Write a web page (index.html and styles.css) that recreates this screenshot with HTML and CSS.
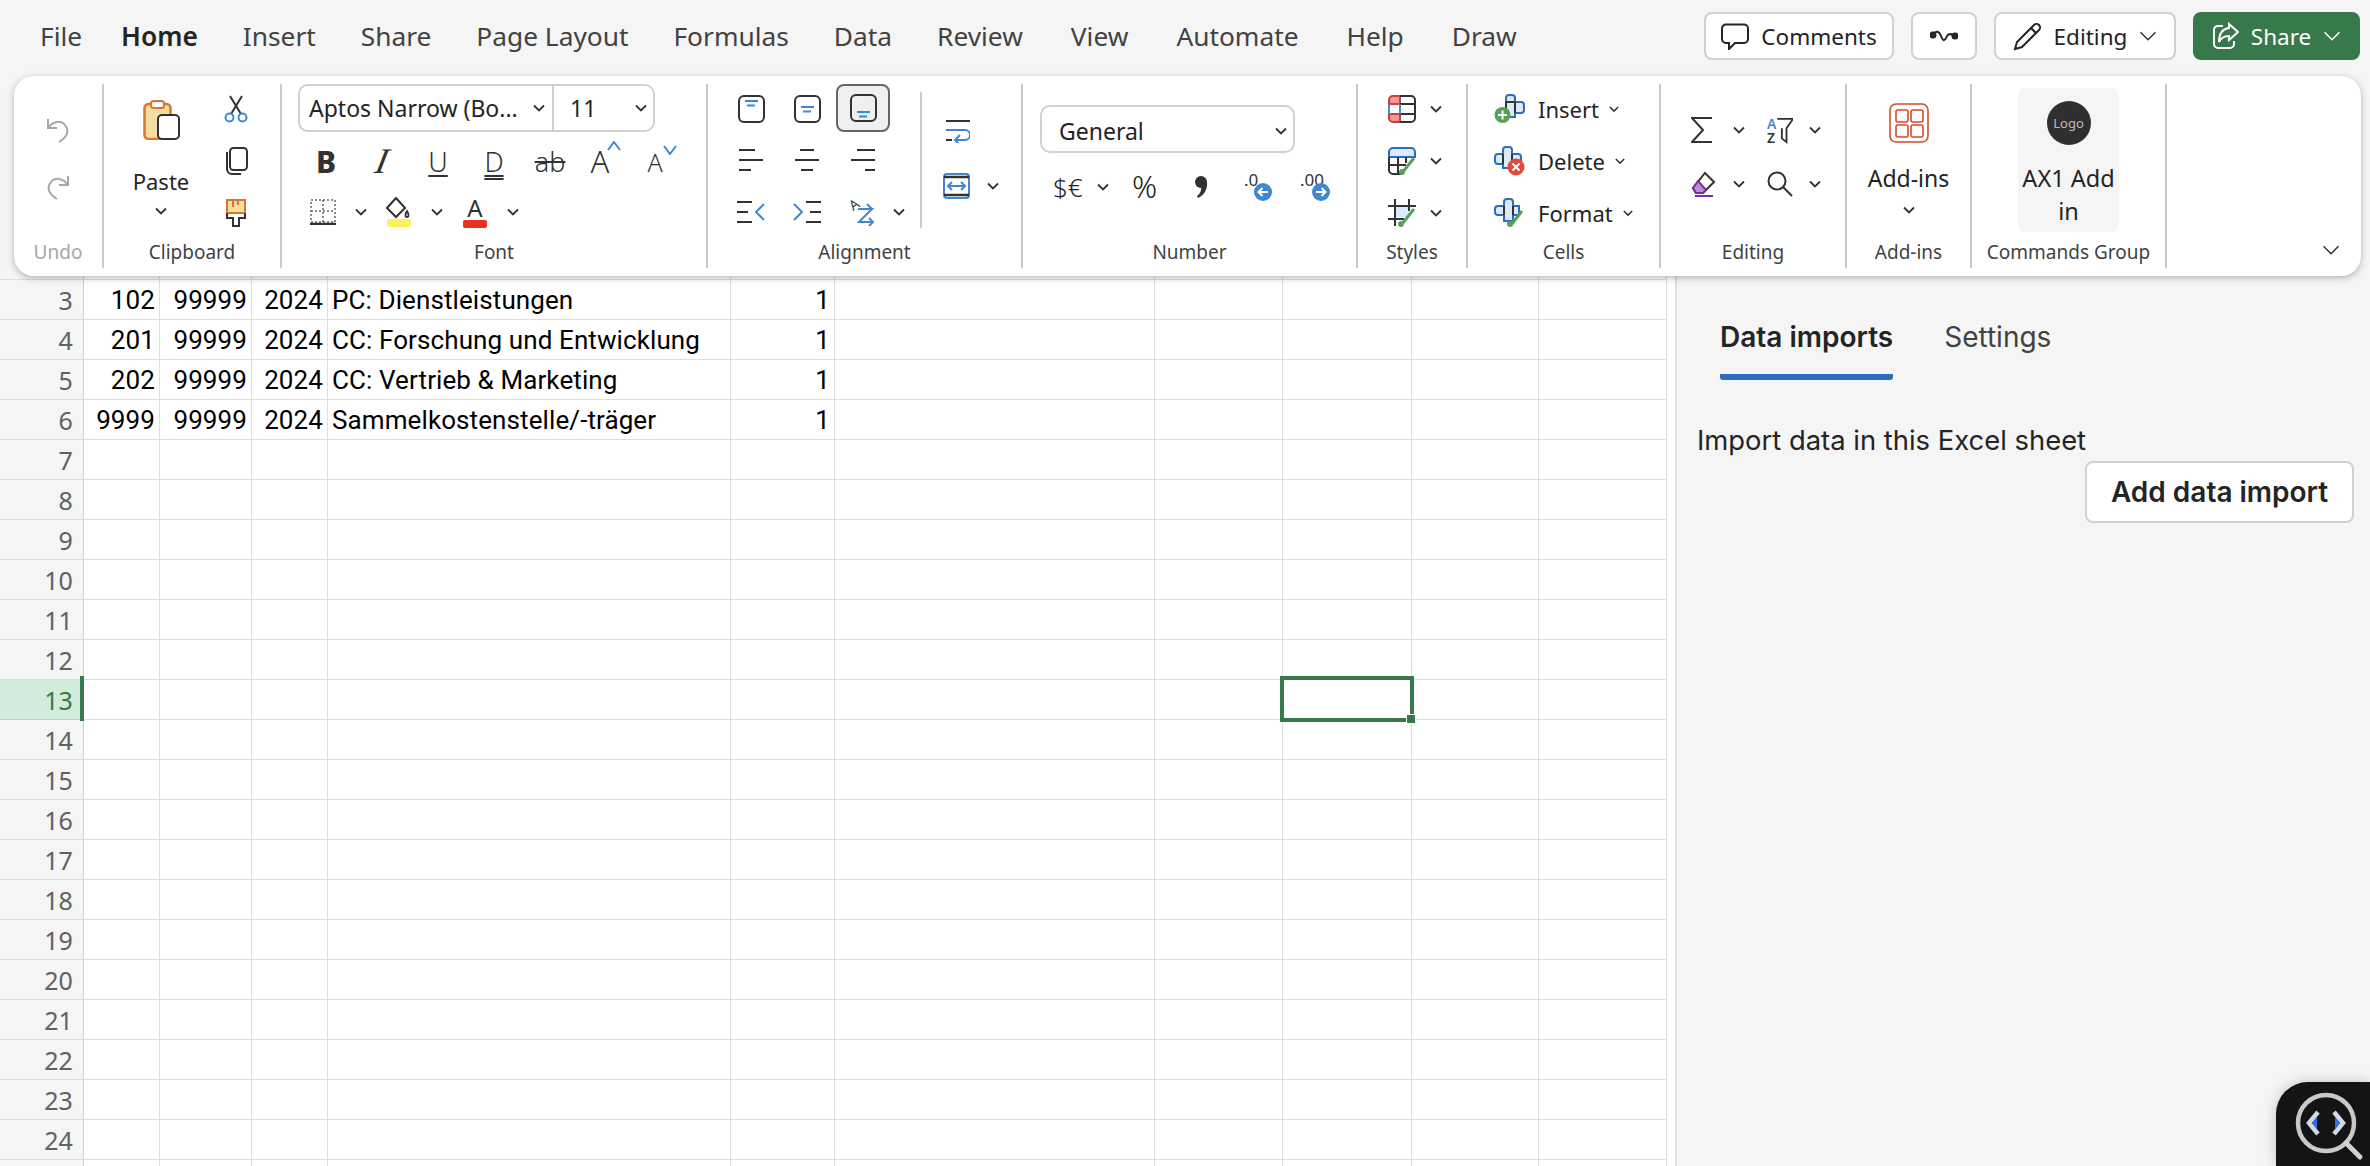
FILE: index.html
```html
<!DOCTYPE html>
<html lang="en">

<head>
    <meta charset="UTF-8">
    <title>Excel - Data imports</title>
    <link rel="stylesheet" href="styles.css">
</head>

<body>
    <svg class="defs" aria-hidden="true">
        <symbol id="chev" viewBox="0 0 12 8"><path d="M1 1.5 6 6.5 11 1.5" fill="none" stroke="currentColor"/></symbol>
    </svg>

    <header class="topbar">
        <nav class="tabs">
            <span>File</span><span class="on">Home</span><span>Insert</span><span>Share</span><span>Page Layout</span><span>Formulas</span><span>Data</span><span>Review</span><span>View</span><span>Automate</span><span>Help</span><span>Draw</span>
        </nav>
        <div class="actions">
            <button class="btn w-comments">
                <svg width="28" height="27" viewBox="0 0 28 27" fill="none" stroke="#242424" stroke-width="2"><path d="M5 1.500H23a4 4 0 0 1 4 4V16a4 4 0 0 1-4 4H14L8 26V20H5a4 4 0 0 1-4-4V5.500a4 4 0 0 1 4-4Z"/></svg>
                Comments
            </button>
            <button class="btn w-wave">
                <svg width="28" height="14" viewBox="0 0 28 14" fill="none" stroke="#242424" stroke-width="2"><path d="M3 6C6 1 9 2 11 7 13 13 15 12 17 7 19 4 22 5 25 7"/><circle cx="3" cy="6" r="2.500" fill="#242424"/><circle cx="25" cy="7" r="2.500" fill="#242424"/></svg>
            </button>
            <button class="btn w-editing">
                <svg width="29" height="29" viewBox="0 0 29 29" fill="none" stroke="#242424" stroke-width="2"><path d="M21 3a3.500 3.500 0 0 1 5 5L9 25 2 27 4 20Z"/><path d="M18 6l5 5"/></svg>
                Editing
                <svg class="chev big"><use href="#chev"/></svg>
            </button>
            <button class="btn share">
                <svg width="27" height="28" viewBox="0 0 27 28" fill="none" stroke="#fff" stroke-width="2"><path d="M11 4H6a4 4 0 0 0-4 4V22a4 4 0 0 0 4 4H18a4 4 0 0 0 4-4V19"/><path d="M17 2 26 10 17 18V14C12 14 9 16 7 20 7 13 10 7 17 6Z"/></svg>
                Share
                <svg class="chev big"><use href="#chev"/></svg>
            </button>
        </div>
    </header>

    <section class="ribbon">
        <div class="group g-undo">
            <div class="body undo">
                <svg width="24" height="26" viewBox="0 0 24 26" fill="none" stroke="#a8a8a8" stroke-width="2"><path d="M2 2V11H11"/><path d="M2 11C7 4 15 3 19 8 24 14 21 20 13 25"/></svg>
                <svg width="24" height="26" viewBox="0 0 24 26" fill="none" stroke="#a8a8a8" stroke-width="2"><path d="M22 2V11H13"/><path d="M22 11C17 4 9 3 5 8 0 14 3 20 11 25"/></svg>
            </div>
            <div class="label muted">Undo</div>
        </div>

        <div class="group g-clip">
            <div class="body clip">
                <div class="big-cmd paste">
                    <svg width="37" height="40" viewBox="0 0 37 40"><rect x="1.500" y="4" width="26" height="35" rx="4" fill="#f5dca3" stroke="#d9772b" stroke-width="2.500"/><rect x="8" y="1" width="13" height="7" rx="2.500" fill="#fff" stroke="#d9772b" stroke-width="2"/><rect x="15" y="15" width="21" height="24" rx="4" fill="#fff" stroke="#323232" stroke-width="2"/></svg>
                    <span class="txt">Paste</span>
                    <svg class="chev"><use href="#chev"/></svg>
                </div>
                <div class="stack centered">
                    <svg width="24" height="28" viewBox="0 0 24 28" fill="none" stroke-width="2"><path d="M6 1 17 19M18 1 7 19" stroke="#323232"/><circle cx="5.500" cy="22.500" r="4" stroke="#3f88cf"/><circle cx="18.500" cy="22.500" r="4" stroke="#3f88cf"/></svg>
                    <svg width="23" height="28" viewBox="0 0 23 28" fill="none" stroke="#323232" stroke-width="2"><rect x="5" y="1" width="17" height="22" rx="3.500"/><path d="M2 5V22a5 5 0 0 0 5 5H16"/></svg>
                    <svg width="20" height="28" viewBox="0 0 20 28"><rect x="1" y="1" width="18" height="13" fill="#f5dca3" stroke="#d9772b" stroke-width="2"/><path d="M7 2V8M12 2V6" stroke="#d9772b" stroke-width="2"/><path d="M1 14V19H7V27H13V19H19V14" fill="none" stroke="#323232" stroke-width="2"/></svg>
                </div>
            </div>
            <div class="label">Clipboard</div>
        </div>

        <div class="group g-font">
            <div class="body font">
                <div class="combo">
                    <div class="combo-name">Aptos Narrow (Bo...<svg class="chev"><use href="#chev"/></svg></div>
                    <div class="combo-size">11<svg class="chev"><use href="#chev"/></svg></div>
                </div>
                <div class="fmt-row">
                    <span class="fmt bold">B</span>
                    <span class="fmt ital">I</span>
                    <span class="fmt under">U</span>
                    <span class="fmt dbl">D</span>
                    <span class="fmt strike">ab</span>
                    <span class="fmt grow">A<svg width="14" height="10" viewBox="0 0 14 10" fill="none" stroke="#3f88cf" stroke-width="2"><path d="M1 9 7 1 13 9"/></svg></span>
                    <span class="fmt shrink">A<svg width="14" height="10" viewBox="0 0 14 10" fill="none" stroke="#3f88cf" stroke-width="2"><path d="M1 1 7 9 13 1"/></svg></span>
                </div>
                <div class="paint-row">
                    <svg width="26" height="26" viewBox="0 0 26 26" fill="none"><path d="M1 1H25V23H1ZM13 1V23M1 12H25" stroke="#666" stroke-width="1.500" stroke-dasharray="2 2"/><path d="M0 25H26" stroke="#323232" stroke-width="2.500"/></svg>
                    <svg class="chev"><use href="#chev"/></svg>
                    <svg width="26" height="30" viewBox="0 0 26 30"><rect x="1" y="22" width="24" height="8" rx="2" fill="#fdf25c"/><path d="M10 1 19 11 10 20 1 11Z" fill="#fff" stroke="#323232" stroke-width="2"/><path d="M21 14c2 3 2 6 0 6s-2-3 0-6Z" fill="#fff" stroke="#323232" stroke-width="1.800"/></svg>
                    <svg class="chev"><use href="#chev"/></svg>
                    <span class="fcolor">A<i></i></span>
                    <svg class="chev"><use href="#chev"/></svg>
                </div>
            </div>
            <div class="label">Font</div>
        </div>

        <div class="group g-align">
            <div class="body align">
                <div class="align-grid">
                    <span class="cell"><svg width="27" height="28" viewBox="0 0 27 28" fill="none" stroke-width="2"><rect x="1" y="1" width="25" height="26" rx="5" stroke="#323232"/><path d="M7 6H20M9 10.500H17" stroke="#3f88cf"/></svg></span>
                    <span class="cell"><svg width="27" height="28" viewBox="0 0 27 28" fill="none" stroke-width="2"><rect x="1" y="1" width="25" height="26" rx="5" stroke="#323232"/><path d="M7 12H20M9 16.500H17" stroke="#3f88cf"/></svg></span>
                    <span class="cell active"><svg width="27" height="28" viewBox="0 0 27 28" fill="none" stroke-width="2"><rect x="1" y="1" width="25" height="26" rx="5" stroke="#323232"/><path d="M7 18H20M9 22.500H17" stroke="#3f88cf"/></svg></span>
                    <span class="cell"></span>

                    <span class="cell"><svg width="24" height="24" viewBox="0 0 24 24" stroke="#323232" stroke-width="2"><path d="M0 2H16M0 12H24M0 22H12"/></svg></span>
                    <span class="cell"><svg width="24" height="24" viewBox="0 0 24 24" stroke="#323232" stroke-width="2"><path d="M5 2H19M0 12H24M6 22H18"/></svg></span>
                    <span class="cell"><svg width="24" height="24" viewBox="0 0 24 24" stroke="#323232" stroke-width="2"><path d="M6 2H24M0 12H24M14 22H24"/></svg></span>
                    <span class="cell"></span>

                    <span class="cell"><svg width="28" height="24" viewBox="0 0 28 24" fill="none" stroke-width="2"><path d="M0 2H15M0 12H11M0 22H15" stroke="#323232"/><path d="M27 4 19 12 27 20" stroke="#3f88cf"/></svg></span>
                    <span class="cell"><svg width="28" height="24" viewBox="0 0 28 24" fill="none" stroke-width="2"><path d="M13 2H28M17 12H28M13 22H28" stroke="#323232"/><path d="M1 4 9 12 1 20" stroke="#3f88cf"/></svg></span>
                    <span class="cell"><svg width="26" height="28" viewBox="0 0 26 28" fill="none"><text class="tilt" x="0" y="11" transform="rotate(-35 5 7)">A</text><path d="M8 11H22L9 24H23M19 20 23 24 19 28M17 6 22 11 17 16" stroke="#3f88cf" stroke-width="2"/></svg></span>
                    <span class="cell chev-cell"><svg class="chev"><use href="#chev"/></svg></span>
                </div>
                <div class="align-side">
                    <svg width="24" height="24" viewBox="0 0 24 24" fill="none" stroke-width="2"><path d="M0 2H24M0 21H6" stroke="#323232"/><path d="M0 11H19a5 5 0 0 1 0 10H10M14 16 9 21 14 26" stroke="#3f88cf"/></svg>
                    <div class="merge">
                        <svg width="27" height="26" viewBox="0 0 27 26" fill="none" stroke-width="2"><rect x="1" y="1" width="25" height="24" rx="3" stroke="#3f88cf"/><path d="M1 4H26M1 22H26" stroke="#323232" stroke-width="2.500"/><path d="M5 13H22M9 9 5 13 9 17M18 9 22 13 18 17" stroke="#3f88cf"/></svg>
                        <svg class="chev"><use href="#chev"/></svg>
                    </div>
                </div>
            </div>
            <div class="label">Alignment</div>
        </div>

        <div class="group g-num">
            <div class="body num">
                <div class="combo-general">General<svg class="chev"><use href="#chev"/></svg></div>
                <div class="num-row">
                    <span class="cur">$€</span>
                    <svg class="chev"><use href="#chev"/></svg>
                    <span class="pct">%</span>
                    <svg width="14" height="24" viewBox="0 0 14 24"><circle cx="7" cy="7" r="6"/><path d="M13 7C14 15 9 21 4 23L3 21C6 19 8 15 7 10Z"/></svg>
                    <svg width="28" height="28" viewBox="0 0 28 28"><text class="dec" x="0" y="13">.0</text><circle cx="19" cy="19" r="9" fill="#3f88cf"/><path d="M24 19H15M18.500 15 14.500 19 18.500 23" fill="none" stroke="#fff" stroke-width="2"/></svg>
                    <svg width="30" height="28" viewBox="0 0 30 28"><text class="dec" x="0" y="13">.00</text><circle cx="21" cy="19" r="9" fill="#3f88cf"/><path d="M16 19H25M21.500 15 25.500 19 21.500 23" fill="none" stroke="#fff" stroke-width="2"/></svg>
                </div>
            </div>
            <div class="label">Number</div>
        </div>

        <div class="group g-styles">
            <div class="body styles stack">
                <div class="line">
                    <svg width="28" height="28" viewBox="0 0 28 28" fill="none" stroke-width="2"><path d="M1 9V5a4 4 0 0 1 4-4H12V9ZM1 19H12V27H5a4 4 0 0 1-4-4Z" fill="#f0989a" stroke="#c7403a"/><path d="M1 9V19" stroke="#3f88cf"/><path d="M12 1H23a4 4 0 0 1 4 4V23a4 4 0 0 1-4 4H12M12 9H27M12 19H27" stroke="#323232"/><path d="M12 9V19" stroke="#3f88cf"/></svg>
                    <svg class="chev"><use href="#chev"/></svg>
                </div>
                <div class="line">
                    <svg width="28" height="28" viewBox="0 0 28 28" fill="none" stroke-width="2"><path d="M1 10V5a4 4 0 0 1 4-4H23a4 4 0 0 1 4 4V10Z" fill="#dcebf9" stroke="#2f6cbe"/><path d="M1 10V23a4 4 0 0 0 4 4H13M1 18H18M10 10V27M18 10V16" stroke="#323232"/><path d="M14 26 26 11" stroke="#56a05a" stroke-width="3"/><circle cx="14" cy="25" r="3" fill="#56a05a"/></svg>
                    <svg class="chev"><use href="#chev"/></svg>
                </div>
                <div class="line">
                    <svg width="28" height="28" viewBox="0 0 28 28" fill="none" stroke-width="2"><path d="M7 7H21V18H7Z" fill="#dcebf9"/><path d="M7 0V27M21 0V12M0 7H28M0 20H16" stroke="#323232"/><path d="M14 25 26 10" stroke="#56a05a" stroke-width="3"/><circle cx="13" cy="25" r="3" fill="#56a05a"/></svg>
                    <svg class="chev"><use href="#chev"/></svg>
                </div>
            </div>
            <div class="label">Styles</div>
        </div>

        <div class="group g-cells">
            <div class="body cells stack">
                <div class="line">
                    <svg width="32" height="30" viewBox="0 0 32 30" fill="none" stroke="#2f6cbe" stroke-width="2"><path d="M12 8V4a3 3 0 0 1 3-3h3a3 3 0 0 1 3 3V8h6a3 3 0 0 1 3 3v5a3 3 0 0 1-3 3H21v4H12V19" fill="#dcebf9"/><path d="M12 8V19M21 8V19M12 8H21" stroke="#323232"/><circle cx="8.500" cy="21" r="8" fill="#56a05a" stroke="none"/><path d="M8.500 16.500V25.500M4 21H13" stroke="#fff"/></svg>
                    <span>Insert</span>
                    <svg class="chev"><use href="#chev"/></svg>
                </div>
                <div class="line">
                    <svg width="32" height="30" viewBox="0 0 32 30" fill="none" stroke="#2f6cbe" stroke-width="2"><path d="M9 8V4a3 3 0 0 1 3-3h3a3 3 0 0 1 3 3V8h6a3 3 0 0 1 3 3v5H18v6H9V18H4a3 3 0 0 1-3-3V11a3 3 0 0 1 3-3Z" fill="#dcebf9"/><path d="M9 8V18M18 8V18" stroke="#323232"/><circle cx="22" cy="21" r="8.500" fill="#e04a3f" stroke="none"/><path d="M18.500 17.500 25.500 24.500M25.500 17.500 18.500 24.500" stroke="#fff"/></svg>
                    <span>Delete</span>
                    <svg class="chev"><use href="#chev"/></svg>
                </div>
                <div class="line">
                    <svg width="32" height="30" viewBox="0 0 32 30" fill="none" stroke="#2f6cbe" stroke-width="2"><path d="M10 8V4a3 3 0 0 1 3-3h3a3 3 0 0 1 3 3V8h6v9H19v6H10V17H4a3 3 0 0 1-3-3V11a3 3 0 0 1 3-3Z" fill="#dcebf9"/><path d="M10 8V17M19 8V17" stroke="#323232"/><path d="M17 27 28 13" stroke="#56a05a" stroke-width="3"/><circle cx="16" cy="26" r="3" fill="#56a05a" stroke="none"/></svg>
                    <span>Format</span>
                    <svg class="chev"><use href="#chev"/></svg>
                </div>
            </div>
            <div class="label">Cells</div>
        </div>

        <div class="group g-edit">
            <div class="body edit">
                <div class="line">
                    <span class="slot"><svg width="22" height="26" viewBox="0 0 22 26" fill="none" stroke="#323232" stroke-width="2"><path d="M21 1H1L12 13 1 25H21"/></svg></span>
                    <svg class="chev"><use href="#chev"/></svg>
                </div>
                <div class="line">
                    <span class="slot"><svg width="28" height="28" viewBox="0 0 28 28" fill="none"><text class="az blue" x="0" y="12">A</text><text class="az" x="0" y="27">Z</text><path d="M11 1H28L21 11V26L16 22V11" stroke="#323232" stroke-width="2"/></svg></span>
                    <svg class="chev"><use href="#chev"/></svg>
                </div>
                <div class="line">
                    <span class="slot"><svg width="26" height="26" viewBox="0 0 26 26" fill="none" stroke-width="2"><path d="M14 2 23 11 12 22 5 22 2 17Z" fill="#fff" stroke="#323232"/><path d="M7 10 15 19 12 22 5 22 2 17Z" fill="#b98dcf" stroke="#7b2e9e"/><path d="M4 25H22" stroke="#7b2e9e"/></svg></span>
                    <svg class="chev"><use href="#chev"/></svg>
                </div>
                <div class="line">
                    <span class="slot"><svg width="26" height="26" viewBox="0 0 26 26" fill="none" stroke="#323232" stroke-width="2"><circle cx="10" cy="10" r="8.500"/><path d="M16 16 25 25"/></svg></span>
                    <svg class="chev"><use href="#chev"/></svg>
                </div>
            </div>
            <div class="label">Editing</div>
        </div>

        <div class="group g-addins">
            <div class="body big-cmd addin">
                <svg width="40" height="40" viewBox="0 0 40 40" fill="none" stroke="#d84a2a" stroke-width="1.600"><rect x="1" y="1" width="38" height="38" rx="6"/><rect x="7" y="7" width="12" height="12" rx="2"/><rect x="22" y="7" width="12" height="12" rx="2"/><rect x="7" y="22" width="12" height="12" rx="2"/><rect x="22" y="22" width="12" height="12" rx="2"/></svg>
                <span class="txt">Add-ins</span>
                <svg class="chev"><use href="#chev"/></svg>
            </div>
            <div class="label">Add-ins</div>
        </div>

        <div class="group g-cmd">
            <div class="body">
                <div class="tile">
                    <div class="logo">Logo</div>
                    <div class="tile-text">AX1 Add<br>in</div>
                </div>
            </div>
            <div class="label">Commands Group</div>
        </div>

        <div class="collapse">
            <svg class="chev big"><use href="#chev"/></svg>
        </div>
    </section>

    <main class="workspace">
        <div class="sheet">
            <table class="grid">
                <colgroup>
                    <col class="c-head"><col class="c-a"><col class="c-b"><col class="c-c"><col class="c-d"><col class="c-e"><col class="c-f"><col class="c-g"><col class="c-h"><col class="c-i"><col class="c-j">
                </colgroup>
                <tr class="cut"><th></th><td></td><td></td><td></td><td></td><td></td><td></td><td></td><td></td><td></td><td></td></tr>
                <tr><th>3</th><td class="n">102</td><td class="n">99999</td><td class="n">2024</td><td>PC: Dienstleistungen</td><td class="n">1</td><td></td><td></td><td></td><td></td><td></td></tr>
                <tr><th>4</th><td class="n">201</td><td class="n">99999</td><td class="n">2024</td><td>CC: Forschung und Entwicklung</td><td class="n">1</td><td></td><td></td><td></td><td></td><td></td></tr>
                <tr><th>5</th><td class="n">202</td><td class="n">99999</td><td class="n">2024</td><td>CC: Vertrieb &amp; Marketing</td><td class="n">1</td><td></td><td></td><td></td><td></td><td></td></tr>
                <tr><th>6</th><td class="n">9999</td><td class="n">99999</td><td class="n">2024</td><td>Sammelkostenstelle/-träger</td><td class="n">1</td><td></td><td></td><td></td><td></td><td></td></tr>
                <tr><th>7</th><td></td><td></td><td></td><td></td><td></td><td></td><td></td><td></td><td></td><td></td></tr>
                <tr><th>8</th><td></td><td></td><td></td><td></td><td></td><td></td><td></td><td></td><td></td><td></td></tr>
                <tr><th>9</th><td></td><td></td><td></td><td></td><td></td><td></td><td></td><td></td><td></td><td></td></tr>
                <tr><th>10</th><td></td><td></td><td></td><td></td><td></td><td></td><td></td><td></td><td></td><td></td></tr>
                <tr><th>11</th><td></td><td></td><td></td><td></td><td></td><td></td><td></td><td></td><td></td><td></td></tr>
                <tr><th>12</th><td></td><td></td><td></td><td></td><td></td><td></td><td></td><td></td><td></td><td></td></tr>
                <tr><th class="cur-row">13</th><td></td><td></td><td></td><td></td><td></td><td></td><td></td><td></td><td></td><td></td></tr>
                <tr><th>14</th><td></td><td></td><td></td><td></td><td></td><td></td><td></td><td></td><td></td><td></td></tr>
                <tr><th>15</th><td></td><td></td><td></td><td></td><td></td><td></td><td></td><td></td><td></td><td></td></tr>
                <tr><th>16</th><td></td><td></td><td></td><td></td><td></td><td></td><td></td><td></td><td></td><td></td></tr>
                <tr><th>17</th><td></td><td></td><td></td><td></td><td></td><td></td><td></td><td></td><td></td><td></td></tr>
                <tr><th>18</th><td></td><td></td><td></td><td></td><td></td><td></td><td></td><td></td><td></td><td></td></tr>
                <tr><th>19</th><td></td><td></td><td></td><td></td><td></td><td></td><td></td><td></td><td></td><td></td></tr>
                <tr><th>20</th><td></td><td></td><td></td><td></td><td></td><td></td><td></td><td></td><td></td><td></td></tr>
                <tr><th>21</th><td></td><td></td><td></td><td></td><td></td><td></td><td></td><td></td><td></td><td></td></tr>
                <tr><th>22</th><td></td><td></td><td></td><td></td><td></td><td></td><td></td><td></td><td></td><td></td></tr>
                <tr><th>23</th><td></td><td></td><td></td><td></td><td></td><td></td><td></td><td></td><td></td><td></td></tr>
                <tr><th>24</th><td></td><td></td><td></td><td></td><td></td><td></td><td></td><td></td><td></td><td></td></tr>
                <tr><th></th><td></td><td></td><td></td><td></td><td></td><td></td><td></td><td></td><td></td><td></td></tr>
            </table>
            <div class="row-mark"></div>
            <div class="selection"><i></i></div>
        </div>

        <aside class="panel">
            <div class="panel-tabs">
                <span class="panel-tab on">Data imports</span>
                <span class="panel-tab">Settings</span>
            </div>
            <p class="panel-text">Import data in this Excel sheet</p>
            <button class="add-btn">Add data import</button>
        </aside>
    </main>

    <div class="inspector">
        <svg width="94" height="84" viewBox="0 0 94 84" fill="none">
            <circle cx="50" cy="41" r="28" stroke="#c9c9c9" stroke-width="4.500"/>
            <path d="M70 61 84 75" stroke="#d2d2d2" stroke-width="5" stroke-linecap="round"/>
            <path d="M42 30 33 41 42 52" stroke="#d4d8e4" stroke-width="4.500"/>
            <path d="M58 30 67 41 58 52" stroke="#d4d8e4" stroke-width="4.500"/>
            <path d="M41 35 36 41 41 47ZM59 35 64 41 59 47Z" fill="#2f6ef0"/>
        </svg>
    </div>
</body>

</html>
```

FILE: styles.css
```css
:root {
    --bg: #f5f5f5;
    --ink: #242424;
    --green: #37794b;
    --line: #dedede;
    --sep: #c8c8c8;
}

* {
    box-sizing: border-box;
}

html,
body {
    height: 1166px;
    overflow: hidden;
}

body {
    margin: 0;
    background: var(--bg);
    color: var(--ink);
    font-family: "Noto Sans", sans-serif;
}

.defs {
    position: absolute;
    width: 0;
    height: 0;
}

.chev {
    width: 12px;
    height: 8px;
    flex: none;
    color: #323232;
    stroke-width: 1.8;
}

.chev.big {
    width: 18px;
    height: 12px;
    stroke-width: 1;
}

/* top menu */
.topbar {
    height: 76px;
    display: flex;
    justify-content: space-between;
    padding: 12px 10px 0 40px;
}

.tabs {
    display: flex;
    gap: 45px;
    height: 48px;
    align-items: center;
    font-size: 26.300px;
    color: #424242;
}

.tabs .on {
    margin-left: -6px;
    font-weight: 600;
    color: #242424;
}

.tabs span:nth-child(n+9) {
    margin-left: 3px;
}

.actions {
    display: flex;
    gap: 17px;
}

.btn {
    height: 48px;
    display: flex;
    align-items: center;
    justify-content: center;
    gap: 12px;
    background: #fff;
    border: 2px solid #d1d1d1;
    border-radius: 8px;
    font: 22.500px "Noto Sans", sans-serif;
    color: var(--ink);
    padding: 0;
}

.w-comments { width: 190px; }
.w-wave { width: 66px; }
.w-editing { width: 182px; }

.share {
    width: 167px;
    background: var(--green);
    border-color: var(--green);
    color: #fff;
}

.share .chev {
    color: #fff;
}

/* ribbon */
.ribbon {
    position: relative;
    z-index: 2;
    height: 200px;
    margin: 0 9px 0 14px;
    padding: 8px 0;
    display: flex;
    background: #fff;
    border-radius: 20px;
    box-shadow: 0 2px 7px rgba(0, 0, 0, 0.28);
}

.group {
    display: grid;
    grid-template-rows: 152px 32px;
    border-right: 2px solid var(--sep);
    flex: none;
}

.label {
    font-size: 19px;
    line-height: 32px;
    text-align: center;
    color: #424242;
}

.label.muted {
    color: #a6a6a6;
}

.g-undo { width: 90px; }
.g-clip { width: 178px; }
.g-font { width: 426px; }
.g-align { width: 315px; }
.g-num { width: 335px; }
.g-styles { width: 110px; }
.g-cells { width: 193px; }
.g-edit { width: 186px; }
.g-addins { width: 125px; }
.g-cmd { width: 195px; }

.undo {
    display: flex;
    flex-direction: column;
    align-items: center;
    gap: 31px;
    padding-top: 33px;
}

.big-cmd {
    display: flex;
    flex-direction: column;
    align-items: center;
    font-size: 22px;
}

.big-cmd .txt {
    line-height: 30px;
    margin: 26px 0 11px;
}

.clip {
    display: flex;
    padding-left: 10px;
}

.paste {
    width: 94px;
    padding-top: 16px;
}

.stack {
    display: grid;
    grid-auto-rows: 52px;
    margin-top: -1px;
}

.centered {
    width: 56px;
    justify-items: center;
    align-items: center;
}

/* font group */
.font {
    padding-left: 16px;
}

.combo {
    width: 357px;
    height: 48px;
    display: flex;
    border: 2px solid #d1d1d1;
    border-radius: 10px;
    font-size: 23px;
}

.combo-name {
    width: 254px;
    display: flex;
    align-items: center;
    justify-content: space-between;
    padding: 0 7px 0 9px;
    border-right: 2px solid #d1d1d1;
}

.combo-size {
    flex: 1;
    display: flex;
    align-items: center;
    justify-content: space-between;
    padding: 0 6px 0 16px;
}

.fmt-row {
    height: 60px;
    display: grid;
    grid-template-columns: repeat(7, 56px);
    justify-items: center;
    align-items: center;
}

.fmt {
    font-size: 27px;
    font-weight: 300;
    line-height: 1.2;
    color: #323232;
}

.bold {
    font-weight: 800;
    font-size: 30px;
}

.ital {
    font-family: "Liberation Serif", serif;
    font-style: italic;
    font-weight: 400;
    font-size: 36px;
    transform: skewX(-12deg);
}

.under {
    text-decoration: underline;
    text-underline-offset: 3px;
}

.dbl {
    text-decoration: underline double;
    text-underline-offset: 3px;
}

.strike {
    text-decoration: line-through;
}

.grow,
.shrink {
    display: flex;
    font-size: 31px;
}

.grow svg,
.shrink svg {
    margin-top: -2px;
}

.grow svg {
    margin-left: -2px;
}

.shrink {
    font-size: 25px;
}

.paint-row {
    height: 40px;
    display: grid;
    grid-template-columns: repeat(6, 38px);
    justify-items: center;
    align-items: center;
    padding-left: 6px;
}

.fcolor {
    display: flex;
    flex-direction: column;
    align-items: center;
    width: 24px;
    font-size: 24px;
    line-height: 22px;
    color: #323232;
}

.fcolor i {
    display: block;
    width: 24px;
    height: 8px;
    margin-top: 1px;
    border-radius: 2px;
    background: #e8321f;
}

/* alignment group */
.align {
    display: flex;
    padding-left: 15px;
}

.align-grid {
    display: grid;
    grid-template-columns: 56px 56px 56px 28px;
    grid-template-rows: 50px 52px 52px;
    justify-items: center;
    align-items: center;
}

.cell {
    display: flex;
    align-items: center;
    justify-content: center;
}

.active {
    align-self: start;
    width: 54px;
    height: 48px;
    background: #efefef;
    border: 2px solid #666;
    border-radius: 8px;
}

.chev-cell {
    justify-self: start;
    margin-left: 2px;
}

.tilt {
    font-size: 14px;
    fill: #323232;
}

.align-side {
    width: 100px;
    height: 136px;
    margin: 8px 0 0 1px;
    padding: 27px 0 0 24px;
    border-left: 2px solid var(--sep);
    display: flex;
    flex-direction: column;
    gap: 30px;
    align-items: flex-start;
}

.merge {
    display: flex;
    align-items: center;
    gap: 17px;
    margin-left: -3px;
}

/* number group */
.num {
    padding: 21px 0 0 17px;
}

.combo-general {
    width: 255px;
    height: 48px;
    display: flex;
    align-items: center;
    justify-content: space-between;
    padding: 3px 6px 0 17px;
    border: 2px solid #d1d1d1;
    border-radius: 10px;
    font-size: 23px;
}

.num-row {
    display: grid;
    grid-template-columns: 44px 35px 62px 50px 56px 30px;
    height: 40px;
    margin-top: 14px;
    padding-left: 13px;
    justify-items: start;
    align-items: center;
    fill: #323232;
}

.cur {
    font-size: 26px;
    font-weight: 300;
    white-space: nowrap;
}

.pct {
    font-size: 31px;
    font-weight: 300;
    line-height: 1.2;
}

.dec {
    font-size: 17px;
    fill: #323232;
}

/* styles and cells */
.styles {
    padding-left: 30px;
}

.line {
    display: flex;
    align-items: center;
}

.styles .line {
    gap: 14px;
}

.cells {
    padding-left: 26px;
    font-size: 22px;
}

.cells .line {
    gap: 12px;
}

.cells .line .chev {
    margin-left: -2px;
    width: 10px;
}

/* editing */
.edit {
    display: grid;
    grid-template-columns: 76px 76px;
    grid-auto-rows: 26px;
    row-gap: 28px;
    padding: 33px 0 0 30px;
}

.edit .line {
    gap: 16px;
}

.slot {
    width: 26px;
    height: 26px;
    display: flex;
}

.az {
    font-size: 15px;
    font-weight: 600;
    fill: #323232;
}

.az.blue {
    fill: #3f88cf;
}

/* add-ins */
.addin {
    padding-top: 19px;
    font-size: 23px;
}

.addin .txt {
    margin: 20px 0 13px;
}

.tile {
    width: 101px;
    height: 144px;
    margin: 4px auto 0;
    padding-top: 13px;
    background: var(--bg);
    border-radius: 8px;
    text-align: center;
    font-size: 23.500px;
}

.logo {
    width: 44px;
    height: 44px;
    margin: 0 auto;
    border-radius: 50%;
    background: #2f2f2f;
    color: #bdbdbd;
    font-size: 13px;
    line-height: 44px;
}

.tile-text {
    margin-top: 17px;
    line-height: 33px;
}

.collapse {
    flex: 1;
    display: flex;
    align-items: flex-end;
    justify-content: flex-end;
    padding: 0 21px 12px 0;
}

/* sheet */
.workspace {
    height: 890px;
    display: flex;
    overflow: hidden;
}

.sheet {
    position: relative;
    width: 1675px;
    flex: none;
    background: #fff;
}

.grid {
    width: 1667px;
    table-layout: fixed;
    border-collapse: separate;
    border-spacing: 0;
    font: 26px Roboto, sans-serif;
    letter-spacing: 0.1px;
    color: #000;
}

.c-head { width: 84px; }
.c-a { width: 76px; }
.c-b { width: 92px; }
.c-c { width: 76px; }
.c-d { width: 403px; }
.c-e { width: 104px; }
.c-f { width: 320px; }
.c-g { width: 128px; }
.c-h { width: 129px; }
.c-i { width: 127px; }
.c-j { width: 128px; }

.grid tr {
    height: 40px;
}

.grid tr.cut {
    height: 4px;
}

.grid th,
.grid td {
    padding: 0;
    border-right: 1px solid var(--line);
    border-bottom: 1px solid var(--line);
    white-space: nowrap;
}

.grid th {
    padding-right: 10px;
    background: var(--bg);
    border-right-color: #cfcfcf;
    text-align: right;
    font: 400 25px "Noto Sans", sans-serif;
    color: #616161;
}

.grid td {
    padding-left: 4px;
}

.grid td.n {
    padding: 0 4px 0 0;
    text-align: right;
}

.grid th.cur-row {
    background: #d3ebdc;
    color: var(--green);
    border-bottom-color: #b5d9c2;
}

.row-mark {
    position: absolute;
    left: 80px;
    top: 400px;
    width: 4px;
    height: 45px;
    background: var(--green);
}

.selection {
    position: absolute;
    left: 1280px;
    top: 400px;
    width: 134px;
    height: 46px;
    border: 4px solid var(--green);
}

.selection i {
    position: absolute;
    right: -6px;
    bottom: -6px;
    width: 10px;
    height: 10px;
    background: var(--green);
    border: 1px solid #fff;
}

/* side panel */
.panel {
    flex: 1;
    display: flex;
    flex-direction: column;
    padding: 41px 16px 0 20px;
    background: var(--bg);
    border-left: 2px solid var(--line);
    font-family: Inter, sans-serif;
}

.panel-tabs {
    display: flex;
    gap: 51px;
    padding-left: 23px;
}

.panel-tab {
    height: 63px;
    font-size: 28px;
    line-height: 40px;
    color: #424242;
}

.panel-tab.on {
    font-weight: 600;
    color: #242424;
    border-bottom: 6px solid #2f6cbe;
    border-radius: 0 0 3px 3px;
}

.panel-text {
    margin: 42px 0 3px;
    font-size: 27.400px;
    line-height: 36px;
}

.add-btn {
    align-self: flex-end;
    width: 269px;
    height: 62px;
    background: #fff;
    border: 2px solid #d1d1d1;
    border-radius: 8px;
    font: 600 28px Inter, sans-serif;
    color: var(--ink);
}

.inspector {
    position: fixed;
    right: 0;
    bottom: 0;
    width: 94px;
    height: 84px;
    background: #141414;
    border-top-left-radius: 32px;
    box-shadow: 0 0 14px rgba(0, 0, 0, 0.2);
}
```
